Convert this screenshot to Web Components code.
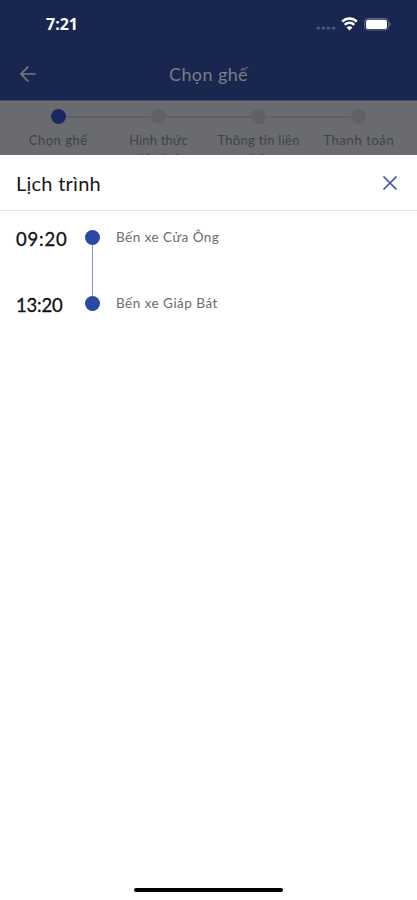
<!DOCTYPE html>
<html lang="vi">
<head>
<meta charset="utf-8">
<meta name="viewport" content="width=device-width, initial-scale=1">
<title>Lịch trình</title>
<style>
  html, body {
    height: 100%;
    margin: 0;
  }

  body {
    background: #fff;
    font-family: Lato, "Open Sans", sans-serif;
    overflow: hidden;
  }
</style>
</head>
<body>
<trip-screen>
  <status-bar slot="top" time="7:21"></status-bar>
  <nav-header slot="top">Chọn ghế</nav-header>
  <step-bar slot="top">
    <step-item active style="--track: .5px">Chọn ghế</step-item>
    <step-item style="--track: .2px">Hình thức đón/trả</step-item>
    <step-item style="--track: .3px">Thông tin liên hệ</step-item>
    <step-item style="--track: .6px">Thanh toán</step-item>
  </step-bar>
  <schedule-sheet heading="Lịch trình">
    <schedule-stop time="09:20">Bến xe Cửa Ông</schedule-stop>
    <schedule-stop time="13:20" style="--time-track: -.2px">Bến xe Giáp Bát</schedule-stop>
  </schedule-sheet>
</trip-screen>

<script>
(() => {
  function define(tag, render) {
    window.customElements.define(tag, class extends HTMLElement {
      constructor() {
        super();
        this.attachShadow({ mode: "open" });
      }

      connectedCallback() {
        this.shadowRoot.innerHTML = render(this);
      }
    });
  }

  define("trip-screen", () => `
    <style>
      :host {
        display: grid;
        grid-template-rows: 155px 1fr;
        height: 100vh;
      }

      .top {
        display: flex;
        flex-direction: column;
        min-height: 0;
        overflow: hidden;
      }
    </style>
    <div class="top"><slot name="top"></slot></div>
    <slot></slot>
  `);

  define("status-bar", (el) => `
    <style>
      :host {
        align-items: center;
        background: #19264f;
        box-sizing: border-box;
        color: #fff;
        display: flex;
        flex: 0 0 48px;
        font: 700 16px/20px "Open Sans", sans-serif;
        justify-content: space-between;
        padding: 0 26px 0 46px;
      }

      svg {
        display: block;
      }
    </style>
    <span>${el.getAttribute("time")}</span>
    <svg width="75" height="16" viewBox="0 0 75 16" aria-hidden="true">
      <g fill="#4d5877">
        <rect x="0.5" y="10.8" width="3.4" height="2.6" rx="1"/>
        <rect x="5.6" y="10.8" width="3.4" height="2.6" rx="1"/>
        <rect x="10.7" y="10.8" width="3.4" height="2.6" rx="1"/>
        <rect x="15.8" y="10.8" width="3.4" height="2.6" rx="1"/>
      </g>
      <g fill="none" stroke="#fff" stroke-width="2.5">
        <path d="M26.2 5.6a10.4 10.4 0 0 1 14.6 0"/>
        <path d="M28.7 8.8a6.8 6.8 0 0 1 9.6 0"/>
      </g>
      <path d="M30.6 11.4a4 4 0 0 1 5.8 0L33.5 14.5z" fill="#fff"/>
      <rect x="48.5" y="2.5" width="24" height="11.5" rx="3.5" fill="none" stroke="#626c8a"/>
      <rect x="50" y="3.7" width="21" height="9.2" rx="2" fill="#fff"/>
      <path d="M73.6 6.2q1.6 2 0 4z" fill="#a3a9ba"/>
    </svg>
  `);

  define("nav-header", () => `
    <style>
      :host {
        align-items: center;
        background: #19264f;
        box-sizing: border-box;
        color: #7b7e83;
        display: grid;
        flex: 0 0 52px;
        font-size: 18px;
        grid-template-columns: 16px 1fr 16px;
        letter-spacing: 0.4px;
        line-height: 24px;
        padding: 0 20px 1px;
        text-align: center;
      }

      svg {
        display: block;
      }
    </style>
    <svg width="16" height="16" viewBox="0 0 16 16" fill="none" stroke="#737b81" stroke-width="1.7" stroke-linecap="round" stroke-linejoin="round" aria-hidden="true">
      <path d="M15 8H1M7.7 1.2L1 8l6.7 6.8"/>
    </svg>
    <span><slot></slot></span>
  `);

  define("step-bar", () => `
    <style>
      :host {
        background: #696b6f;
        border-top: 1px solid #484e63;
        box-sizing: border-box;
        display: flex;
        flex: 0 0 90px;
        padding: 8px 8px 0;
      }
    </style>
    <slot></slot>
  `);

  define("step-item", () => `
    <style>
      :host {
        color: #414346;
        display: flex;
        flex: 1;
        flex-direction: column;
        font-size: 13px;
        letter-spacing: var(--track, 0);
        line-height: 19px;
        text-align: center;
      }

      .rail {
        align-items: center;
        display: flex;
        height: 15px;
      }

      .rail::before,
      .rail::after {
        background: #606164;
        content: "";
        flex: 1;
        height: 2px;
      }

      :host(:first-child) .rail::before,
      :host(:last-child) .rail::after,
      :host([active]) .rail::before {
        background: none;
      }

      .dot {
        background: #606162;
        border-radius: 50%;
        height: 15px;
        width: 15px;
      }

      :host([active]) .dot {
        background: #192a60;
      }

      .label {
        margin: 7px 4px 0;
      }
    </style>
    <div class="rail"><span class="dot"></span></div>
    <div class="label"><slot></slot></div>
  `);

  define("schedule-sheet", (el) => `
    <style>
      :host {
        background: #fff;
        display: grid;
        grid-template-rows: 56px 1fr 20px;
      }

      header {
        align-items: center;
        border-bottom: 1px solid #e4e4e4;
        color: #17181a;
        display: flex;
        font-size: 20px;
        justify-content: space-between;
        letter-spacing: 0.25px;
        line-height: 26px;
        padding: 0 20px 0 16px;
      }

      h1 {
        font: inherit;
        margin: 0;
      }

      main {
        padding: 15px 16px 0;
      }

      .home {
        background: #000;
        border-radius: 2px;
        height: 4px;
        justify-self: center;
        margin-top: 8px;
        width: 149px;
      }
    </style>
    <header>
      <h1>${el.getAttribute("heading")}</h1>
      <svg width="14" height="14" viewBox="0 0 14 14" fill="none" stroke="#3f4eae" stroke-width="1.7" stroke-linecap="round" aria-hidden="true">
        <path d="M1 1l12 12M13 1L1 13"/>
      </svg>
    </header>
    <main><slot></slot></main>
    <div class="home"></div>
  `);

  define("schedule-stop", (el) => `
    <style>
      :host {
        column-gap: 15.5px;
        display: grid;
        grid-template-columns: 53.5px 15px 1fr;
        height: 66px;
      }

      .time {
        color: #111;
        font-size: 18.5px;
        letter-spacing: var(--time-track, 0.8px);
        line-height: 26px;
        -webkit-text-stroke: 0.3px #111;
      }

      .marker {
        align-items: center;
        display: flex;
        flex-direction: column;
        padding-top: 4px;
      }

      .dot {
        background: #2a49a5;
        border-radius: 50%;
        flex: 0 0 15px;
        width: 15px;
      }

      .line {
        background: #8790c3;
        flex: 1;
        margin-bottom: -4px;
        width: 1.5px;
      }

      :host(:last-child) .line {
        display: none;
      }

      .place {
        color: #6b6c6e;
        font-size: 13.5px;
        letter-spacing: 0.48px;
        line-height: 22px;
        padding-left: 0.5px;
      }
    </style>
    <span class="time">${el.getAttribute("time")}</span>
    <span class="marker"><span class="dot"></span><span class="line"></span></span>
    <span class="place"><slot></slot></span>
  `);
})();
</script>
</body>
</html>
